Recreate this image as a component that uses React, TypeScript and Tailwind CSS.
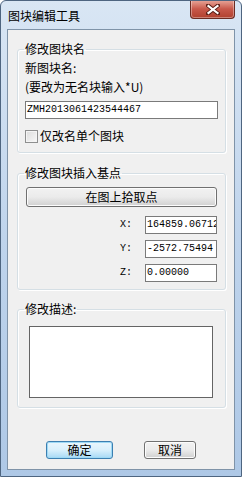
import React from 'react';

const cjk = "font-['SimSun','Noto_Sans_CJK_SC',sans-serif]";
const mono = "font-['Liberation_Mono','Noto_Sans_CJK_SC',monospace]";

const GroupBox: React.FC<{ title: string; className?: string; children: React.ReactNode }> = ({
  title,
  className,
  children,
}) => {
  return (
    <fieldset
      className={`mx-[9px] w-[209px] rounded-[3px] border border-[#d5dfe5] shadow-[inset_1px_1px_0_#ffffff,1px_1px_0_#ffffff] ${className ?? ''}`}
    >
      <legend className="ml-[6px] px-[1px] text-[12px] leading-[16px] text-black">{title}</legend>
      {children}
    </fieldset>
  );
};

const TextBox: React.FC<{ value: string; className?: string }> = ({ value, className }) => (
  <div
    className={`flex h-[18px] items-center overflow-hidden whitespace-nowrap border border-[#7a7a7a] bg-white pl-[1px] text-[10px] leading-[16px] text-black ${mono} ${className ?? ''}`}
  >
    {value}
  </div>
);

const App: React.FC = () => {
  return (
    <div className={`flex h-[477px] w-[242px] flex-col overflow-hidden rounded-t-[6px] border border-[#4e6580] bg-gradient-to-b from-[#d9e6f4] via-[#bfd4ec] to-[#aec8e6] ${cjk}`}>
      {/* title bar */}
      <div className="flex h-[28px] shrink-0 items-start">
        <span className="pl-[7px] pt-[8px] text-[12px] leading-[14px] text-black">图块编辑工具</span>
        <button className="-mt-px ml-auto mr-[6px] flex h-[19px] w-[45px] items-center justify-center rounded-b-[4px] border border-t-0 border-[#6b2b22] bg-gradient-to-b from-[#e8a89c] via-[#c8584a] to-[#b0402e] shadow-[inset_0_0_0_1px_rgba(255,255,255,0.35)]">
          <svg width="14" height="11" viewBox="0 0 14 11">
            <path d="M2 1.5 L12 9.5 M12 1.5 L2 9.5" stroke="#5a1e16" strokeWidth="4" strokeLinecap="square" />
            <path d="M2.5 2 L11.5 9 M11.5 2 L2.5 9" stroke="#ffffff" strokeWidth="2.2" strokeLinecap="square" />
          </svg>
        </button>
      </div>

      {/* client area */}
      <div className="mx-[6px] flex h-[441px] w-[228px] shrink-0 flex-col border border-[#7f93a8] bg-[#f0f0f0]">
        <GroupBox title="修改图块名" className="mt-[11px]">
          <div className="px-[7px] pb-[8px] pt-[3px] text-[12px] leading-[16px] text-black">
            <div>新图块名:</div>
            <div className="mt-[3px]">(要改为无名块输入*U)</div>
            <TextBox value="ZMH2013061423544467" className="mt-[6px] w-[193px]" />
            <label className="mt-[9px] flex h-[16px] items-center gap-[2px]">
              <span className="h-[13px] w-[13px] border border-[#8e8f8f] bg-gradient-to-br from-[#dcdcdc] to-[#f8f8f8] shadow-[inset_0_0_0_1px_#f4f4f4]" />
              <span>仅改名单个图块</span>
            </label>
          </div>
        </GroupBox>

        <GroupBox title="修改图块插入基点" className="mt-[12px]">
          <div className="flex flex-col px-[8px] pb-[7px] pt-[6px]">
            <button className="flex h-[20px] w-[191px] items-center justify-center rounded-[3px] border border-[#707070] bg-gradient-to-b from-[#f2f2f2] via-[#ebebeb] to-[#d0d0d0] text-[12px] leading-[14px] text-black shadow-[inset_0_0_0_1px_#fcfcfc]">
              在图上拾取点
            </button>
            <div className="mt-[9px] flex flex-col gap-[6px] pl-[94px]">
              {[
                ['X:', '164859.06712'],
                ['Y:', '-2572.75494'],
                ['Z:', '0.00000'],
              ].map(([label, value]) => (
                <div key={label} className="flex items-center">
                  <span className={`w-[25px] text-[10px] leading-[14px] text-black ${mono}`}>{label}</span>
                  <TextBox value={value} className="w-[72px]" />
                </div>
              ))}
            </div>
          </div>
        </GroupBox>

        <GroupBox title="修改描述:" className="mt-[11px]">
          <div className="px-[11px] pb-[9px] pt-[9px]">
            <div className="h-[72px] w-[184px] border border-[#646464] bg-white" />
          </div>
        </GroupBox>

        <div className="mt-auto mb-[10px] flex items-center">
          <button className="ml-[38px] flex h-[18px] w-[67px] items-center justify-center rounded-[3px] border border-[#3c7fb1] bg-gradient-to-b from-[#eaf6fd] via-[#d9f0fc] to-[#a7d9f5] text-[12px] leading-[14px] text-black shadow-[inset_0_0_0_1px_#9ed9f5]">
            确定
          </button>
          <button className="ml-[31px] flex h-[18px] w-[52px] items-center justify-center rounded-[3px] border border-[#707070] bg-gradient-to-b from-[#f2f2f2] via-[#ebebeb] to-[#d0d0d0] text-[12px] leading-[14px] text-black shadow-[inset_0_0_0_1px_#fcfcfc]">
            取消
          </button>
        </div>
      </div>
    </div>
  );
};

export default App;
